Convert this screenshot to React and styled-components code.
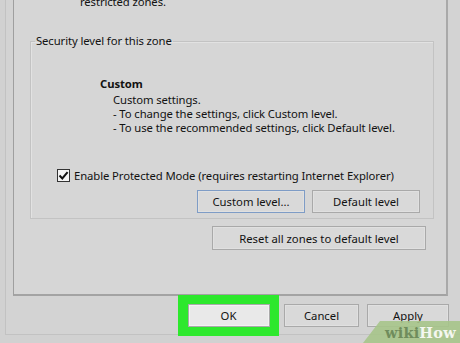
import React from 'react'
import styled, { createGlobalStyle } from 'styled-components'

const GlobalStyle = createGlobalStyle`
  html, body {
    margin: 0;
    padding: 0;
    background: #d2d2d2;
  }
  * {
    box-sizing: border-box;
  }
`

const Screen = styled.div`
  position: relative;
  width: 460px;
  height: 343px;
  overflow: hidden;
  background: #d1d1d1;
  font-family: 'Noto Sans', 'Open Sans', sans-serif;
  font-size: 11.3px;
  letter-spacing: -0.1px;
  color: #121212;
  padding-left: 5px;
`

const Window = styled.div`
  width: 455px;
  height: 335px;
  border-left: 1px solid #c2c2c2;
  border-bottom: 1px solid #c2c2c2;
  background: #d3d3d3;
  padding-left: 7px;
  display: flex;
  flex-direction: column;
`

const TabPanel = styled.div`
  width: 435px;
  height: 304px;
  flex-shrink: 0;
  margin-top: -8px;
  background: #d6d6d6;
  border-left: 1px solid #9f9f9f;
  border-right: 2px solid #a9a9a9;
  border-bottom: 2px solid #a3a3a3;
  padding: 0 0 0 16px;
  display: flex;
  flex-direction: column;
`

const ZoneText = styled.p`
  margin: 0 0 0 50px;
  padding-top: 3px;
  line-height: 14px;
  height: 42px;
  flex-shrink: 0;
`

const Group = styled.fieldset`
  margin: 0;
  width: 404px;
  height: 185px;
  flex-shrink: 0;
  border: 1px solid #c3c3c3;
  box-shadow: inset 1px 1px 0 #e2e2e2;
  padding: 0 0 0 26px;
  display: flex;
  flex-direction: column;
`

const Legend = styled.legend`
  padding: 0 1px;
  margin-left: -22px;
  line-height: 14px;
`

const LevelName = styled.div`
  margin: 27px 0 0 43px;
  font-weight: 700;
  line-height: 18px;
`

const LevelText = styled.div`
  margin-left: 56px;
  line-height: 14px;
`

const CheckRow = styled.label`
  display: flex;
  align-items: center;
  gap: 4px;
  margin-top: 33px;
  height: 14px;
  white-space: nowrap;
`

const Box = styled.span`
  width: 13px;
  height: 13px;
  border: 1px solid #333;
  background: #f4f4f4;
  display: flex;
  align-items: center;
  justify-content: center;
`

const ButtonRow = styled.div`
  display: flex;
  justify-content: flex-end;
  gap: 7px;
  margin: 8px 13px 0 0;
`

const Button = styled.button`
  font: inherit;
  color: #121212;
  width: ${(p) => p.$w}px;
  height: ${(p) => p.$h || 23}px;
  padding: 0;
  background: ${(p) => (p.$light ? '#e9e9e9' : '#d9d9d9')};
  border: 1px solid ${(p) => (p.$focus ? '#7e9cc6' : '#a9a9a9')};
  box-shadow: inset 0 0 0 1px ${(p) => (p.$light ? '#f2f2f2' : '#e0e0e0')};
`

const ResetRow = styled.div`
  display: flex;
  justify-content: flex-end;
  margin: 7px 20px 0 0;
`

const Footer = styled.div`
  display: flex;
  align-items: center;
  height: 39px;
  padding-left: 165px;
`

const Highlight = styled.div`
  width: 101px;
  height: 41px;
  background: #2de82d;
  display: flex;
  align-items: center;
  justify-content: center;
  margin-top: -1px;
  margin-right: 5px;
`

const FooterButtons = styled.div`
  display: flex;
  gap: 8px;
`

const Watermark = styled.div`
  position: absolute;
  right: 0;
  bottom: 0;
  width: 97px;
  height: 22px;
`

const MarkText = styled.span`
  position: absolute;
  left: 22px;
  bottom: 2px;
  font-family: 'DejaVu Serif', 'Liberation Serif', serif;
  font-weight: 700;
  font-size: 14.5px;
  letter-spacing: 0.2px;
  color: #6f8c5c;

  b {
    color: #f4f7f0;
  }
`

const CheckMark = () => (
  <svg width='11' height='11' viewBox='0 0 11 11'>
    <path d='M1.5 5.5 L4.3 8.4 L9.6 2.2' fill='none' stroke='#111' strokeWidth='2' />
  </svg>
)

export default function App() {
  return (
    <Screen>
      <GlobalStyle />
      <Window>
        <TabPanel>
          <ZoneText>restricted zones.</ZoneText>
          <Group>
            <Legend>Security level for this zone</Legend>
            <LevelName>Custom</LevelName>
            <LevelText>Custom settings.</LevelText>
            <LevelText>- To change the settings, click Custom level.</LevelText>
            <LevelText>- To use the recommended settings, click Default level.</LevelText>
            <CheckRow>
              <Box>
                <CheckMark />
              </Box>
              Enable Protected Mode (requires restarting Internet Explorer)
            </CheckRow>
            <ButtonRow>
              <Button $w={108} $focus>Custom level...</Button>
              <Button $w={108}>Default level</Button>
            </ButtonRow>
          </Group>
          <ResetRow>
            <Button $w={214} $h={24}>Reset all zones to default level</Button>
          </ResetRow>
        </TabPanel>
        <Footer>
          <Highlight>
            <Button $w={82} $light>OK</Button>
          </Highlight>
          <FooterButtons>
            <Button $w={75}>Cancel</Button>
            <Button $w={82}>Apply</Button>
          </FooterButtons>
        </Footer>
      </Window>
      <Watermark>
        <svg width='97' height='22' viewBox='0 0 97 22'>
          <polygon points='17,0 97,0 97,22 0,22' fill='#a6c48a' opacity='0.9' />
        </svg>
        <MarkText>
          wiki<b>How</b>
        </MarkText>
      </Watermark>
    </Screen>
  )
}
